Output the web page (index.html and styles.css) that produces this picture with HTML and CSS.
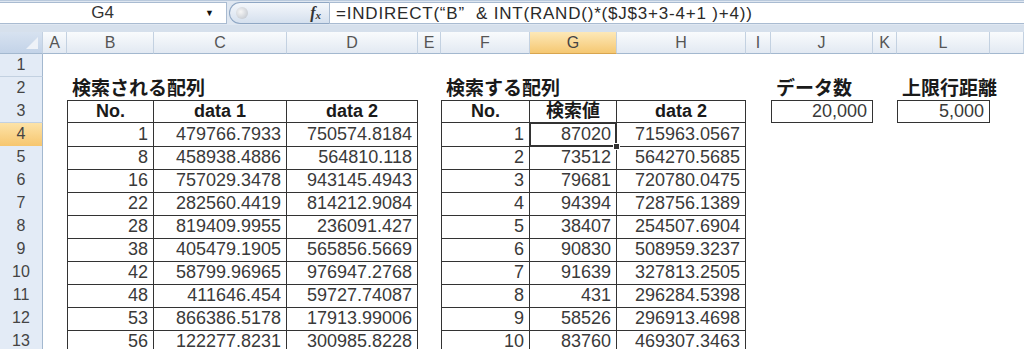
FILE: index.html
```html
<!DOCTYPE html>
<html lang="ja">
<head>
  <meta charset="UTF-8">
  <title>INDIRECT</title>
  <link rel="stylesheet" href="styles.css">
</head>
<body>

  <div class="formula-bar">
    <div class="name-box">
      <span class="name">G4</span>
      <span class="arrow">&#9660;</span>
    </div>
    <div class="fx-pill">
      <span class="knob"></span>
      <span class="fx">f<sub>x</sub></span>
    </div>
    <div class="formula">=INDIRECT(“B”&nbsp; &amp; INT(RAND()*($J$3+3-4+1 )+4))</div>
  </div>
  <div class="strip"></div>

  <div class="sheet">
    <div class="row col-head">
      <div class="corner"><span class="tri"></span></div>
      <div>A</div><div>B</div><div>C</div><div>D</div><div>E</div><div>F</div>
      <div class="sel">G</div><div>H</div><div>I</div><div>J</div><div>K</div><div>L</div><div></div>
    </div>

    <div class="row">
      <div class="rh">1</div>
      <div></div><div></div><div></div><div></div><div></div><div></div><div></div><div></div><div></div><div></div><div></div><div></div><div></div>
    </div>

    <div class="row">
      <div class="rh">2</div>
      <div></div>
      <div class="title">検索される配列</div><div></div><div></div>
      <div></div>
      <div class="title">検索する配列</div><div></div><div></div>
      <div></div>
      <div class="title">データ数</div>
      <div></div>
      <div class="title">上限行距離</div>
      <div></div>
    </div>

    <div class="row">
      <div class="rh">3</div>
      <div></div>
      <div class="c hd first top">No.</div><div class="c hd top">data 1</div><div class="c hd top">data 2</div>
      <div></div>
      <div class="c hd first top">No.</div><div class="c hd top">検索値</div><div class="c hd top">data 2</div>
      <div></div>
      <div class="c box">20,000</div>
      <div></div>
      <div class="c box">5,000</div>
      <div></div>
    </div>

    <div class="row">
      <div class="rh sel">4</div>
      <div></div>
      <div class="c first">1</div><div class="c">479766.7933</div><div class="c">750574.8184</div>
      <div></div>
      <div class="c first">1</div><div class="c active">87020</div><div class="c">715963.0567</div>
      <div></div><div></div><div></div><div></div><div></div>
    </div>

    <div class="row">
      <div class="rh">5</div>
      <div></div>
      <div class="c first">8</div><div class="c">458938.4886</div><div class="c">564810.118</div>
      <div></div>
      <div class="c first">2</div><div class="c">73512</div><div class="c">564270.5685</div>
      <div></div><div></div><div></div><div></div><div></div>
    </div>

    <div class="row">
      <div class="rh">6</div>
      <div></div>
      <div class="c first">16</div><div class="c">757029.3478</div><div class="c">943145.4943</div>
      <div></div>
      <div class="c first">3</div><div class="c">79681</div><div class="c">720780.0475</div>
      <div></div><div></div><div></div><div></div><div></div>
    </div>

    <div class="row">
      <div class="rh">7</div>
      <div></div>
      <div class="c first">22</div><div class="c">282560.4419</div><div class="c">814212.9084</div>
      <div></div>
      <div class="c first">4</div><div class="c">94394</div><div class="c">728756.1389</div>
      <div></div><div></div><div></div><div></div><div></div>
    </div>

    <div class="row">
      <div class="rh">8</div>
      <div></div>
      <div class="c first">28</div><div class="c">819409.9955</div><div class="c">236091.427</div>
      <div></div>
      <div class="c first">5</div><div class="c">38407</div><div class="c">254507.6904</div>
      <div></div><div></div><div></div><div></div><div></div>
    </div>

    <div class="row">
      <div class="rh">9</div>
      <div></div>
      <div class="c first">38</div><div class="c">405479.1905</div><div class="c">565856.5669</div>
      <div></div>
      <div class="c first">6</div><div class="c">90830</div><div class="c">508959.3237</div>
      <div></div><div></div><div></div><div></div><div></div>
    </div>

    <div class="row">
      <div class="rh">10</div>
      <div></div>
      <div class="c first">42</div><div class="c">58799.96965</div><div class="c">976947.2768</div>
      <div></div>
      <div class="c first">7</div><div class="c">91639</div><div class="c">327813.2505</div>
      <div></div><div></div><div></div><div></div><div></div>
    </div>

    <div class="row">
      <div class="rh">11</div>
      <div></div>
      <div class="c first">48</div><div class="c">411646.454</div><div class="c">59727.74087</div>
      <div></div>
      <div class="c first">8</div><div class="c">431</div><div class="c">296284.5398</div>
      <div></div><div></div><div></div><div></div><div></div>
    </div>

    <div class="row">
      <div class="rh">12</div>
      <div></div>
      <div class="c first">53</div><div class="c">866386.5178</div><div class="c">17913.99006</div>
      <div></div>
      <div class="c first">9</div><div class="c">58526</div><div class="c">296913.4698</div>
      <div></div><div></div><div></div><div></div><div></div>
    </div>

    <div class="row">
      <div class="rh">13</div>
      <div></div>
      <div class="c first">56</div><div class="c">122277.8231</div><div class="c">300985.8228</div>
      <div></div>
      <div class="c first">10</div><div class="c">83760</div><div class="c">469307.3463</div>
      <div></div><div></div><div></div><div></div><div></div>
    </div>
  </div>

</body>
</html>
```

FILE: styles.css
```css
/* hoja de calculo */
body {
  margin: 0;
  font-family: "Liberation Sans", "Noto Sans CJK JP", sans-serif;
  color: #333;
  background-color: #fff;
  overflow: hidden;
}
.formula-bar {
  height: 25px;
  display: flex;
  align-items: stretch;
  background-color: #dfe7f1;
  border-top: 1px solid #b9c9dc;
  box-sizing: border-box;
}
.name-box {
  width: 227px;
  margin: 1px 0 1px 0;
  background-color: #fff;
  border: 1px solid #a9bbd1;
  border-left: none;
  box-sizing: border-box;
  display: flex;
  align-items: center;
  font-size: 17px;
}
.name {
  width: 205px;
  text-align: center;
  color: #333;
}
.arrow {
  font-size: 9px;
  color: #111;
}
.fx-pill {
  width: 100px;
  display: flex;
  align-items: center;
  justify-content: space-between;
  margin-left: 2px;
  margin-top: 1px;
  margin-bottom: 1px;
  border: 1px solid #8fa7c4;
  border-right: none;
  border-radius: 12px 0 0 12px;
  background: linear-gradient(#f4f7fb, #d5e0ee);
  box-sizing: border-box;
}
.knob {
  width: 12px;
  height: 12px;
  margin-left: 6px;
  border-radius: 50%;
  background: radial-gradient(circle at 40% 40%, #f6f6f6, #b9bfc8);
}
.fx {
  font-family: "Liberation Serif", serif;
  font-style: italic;
  font-weight: bold;
  font-size: 16px;
  color: #333;
  margin-right: 8px;
}
.fx sub {
  font-size: 11px;
  vertical-align: -1px;
}
.formula {
  flex: 1;
  margin: 1px 0;
  background-color: #fff;
  border: 1px solid #a9bbd1;
  border-right: none;
  box-sizing: border-box;
  font-size: 17px;
  letter-spacing: 0.8px;
  line-height: 21px;
  padding-left: 6px;
  color: #2a2a2a;
  white-space: nowrap;
}
.strip {
  height: 7px;
  background-color: #d6e0ec;
}
.row {
  display: grid;
  grid-template-columns: 43px 24px 87px 133px 131px 23px 89px 87px 129px 25px 102px 24px 93px 1fr;
  height: 23px;
}
.row > div {
  box-sizing: border-box;
  white-space: nowrap;
}
.col-head {
  height: 22px;
}
.col-head > div {
  background: linear-gradient(#f9fbfd, #e2e9f2);
  border-right: 1px solid #c3d1e1;
  border-bottom: 1px solid #a3b8cf;
  text-align: center;
  font-size: 16px;
  line-height: 21px;
  color: #555;
}
.col-head > .sel {
  background: linear-gradient(#fde8b8, #f5c872);
  border-bottom-color: #d8a54f;
  color: #444;
}
.col-head > .corner {
  position: relative;
  background: linear-gradient(#d7e2f0, #c3d3e8);
}
.tri {
  position: absolute;
  right: 4px;
  bottom: 4px;
  width: 0;
  height: 0;
  border-left: 12px solid transparent;
  border-bottom: 12px solid #eef2f8;
}
.rh {
  background-color: #e3ebf6;
  border-right: 1px solid #a3b8cf;
  border-bottom: 1px solid #c3d1e1;
  text-align: center;
  font-size: 16px;
  line-height: 22px;
  color: #444;
}
.rh.sel {
  background: linear-gradient(#fde3a8, #f6c66f);
}
.title {
  font-size: 19px;
  font-weight: bold;
  line-height: 24px;
  padding-left: 5px;
  color: #1a1a1a;
}
.c {
  border-right: 1px solid #333;
  border-bottom: 1px solid #333;
  text-align: right;
  padding-right: 5px;
  font-size: 18px;
  line-height: 23px;
  color: #3a3a3a;
}
.c.first {
  border-left: 1px solid #333;
}
.c.top {
  border-top: 1px solid #333;
  line-height: 21px;
}
.c.hd {
  text-align: center;
  padding-right: 0;
  font-weight: bold;
  font-size: 18px;
  color: #1a1a1a;
}
.c.box {
  border: 1px solid #333;
  line-height: 21px;
}
.c.active {
  position: relative;
}
.c.active::after {
  content: "";
  position: absolute;
  left: -1px;
  top: -1px;
  right: -1px;
  bottom: -1px;
  border: 2px solid #333;
}
.c.active::before {
  content: "";
  position: absolute;
  right: -4px;
  bottom: -4px;
  width: 5px;
  height: 5px;
  background-color: #333;
  border: 1px solid #fff;
  z-index: 1;
}
```
